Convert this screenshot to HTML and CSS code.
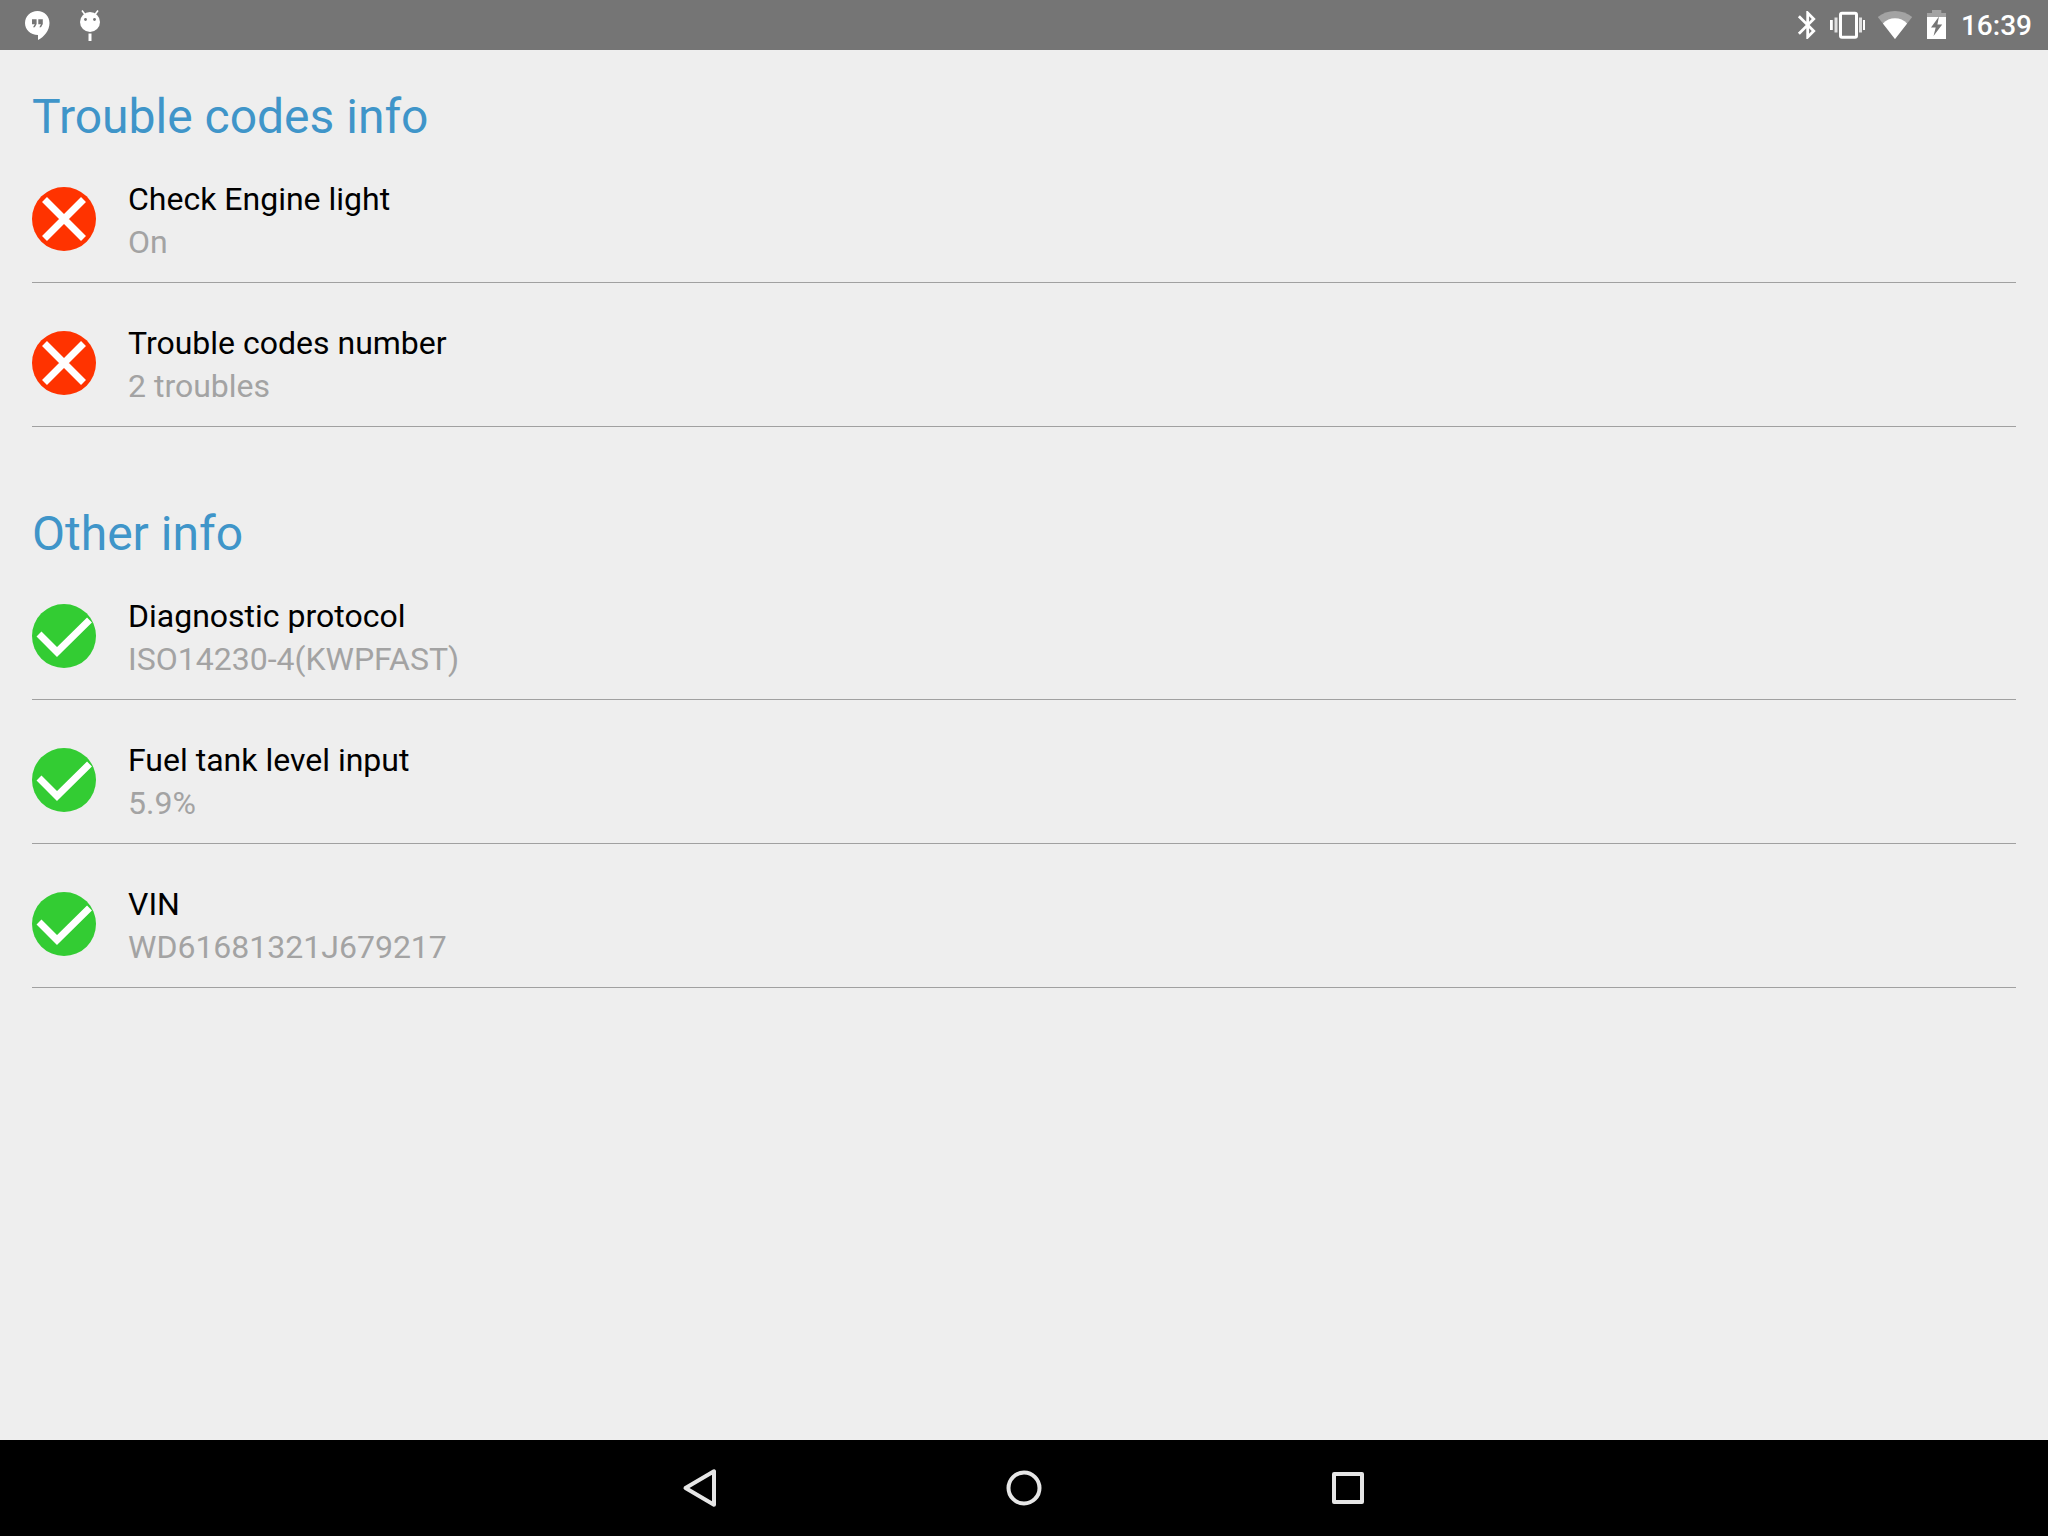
FILE: index.html
```
<!DOCTYPE html>
<html lang="en">
<head>
  <meta charset="UTF-8" />
  <meta name="viewport" content="width=device-width, initial-scale=1.0" />
  <title>Trouble codes info</title>
  <link rel="stylesheet" href="styles.css">
</head>
<body>
  <!-- Icons used more than once -->
  <svg class="sprite" aria-hidden="true">
    <symbol id="icon-error" viewBox="0 0 64 64">
      <circle cx="32" cy="32" r="32" fill="#ff3300"/>
      <path d="M12.5 12.5l39 39M51.5 12.5l-39 39" stroke="#fff" stroke-width="7" fill="none"/>
    </symbol>
    <symbol id="icon-ok" viewBox="0 0 64 64">
      <circle cx="32" cy="32" r="32" fill="#33cc33"/>
      <path d="M7 30l18 18L57.5 16" stroke="#fff" stroke-width="7" fill="none"/>
    </symbol>
  </svg>

  <!-- Status bar -->
  <header class="status-bar">
    <div class="notifications">
      <svg width="48" height="50" viewBox="0 0 48 50" role="img" aria-label="Hangouts">
        <path fill="#fff" fill-rule="evenodd" d="M24.5 11C31.4 11 36.500 16.2 36.500 23C36.500 30.500 31 37 25 40V35C17.500 35 12 29.700 12 23C12 16.200 17.500 11 24.500 11zM19 19.300V24.300H21.800L20 27.300H21.800L23.600 24V19.300zM25.300 19.300V24.300H28L26.300 27.300H28L29.800 24V19.300z"/>
      </svg>
      <svg width="48" height="50" viewBox="0 0 48 50" role="img" aria-label="Android">
        <path d="M16 10.5l3 4M32 10.5l-3 4" stroke="#fff" stroke-width="1.6"/>
        <circle cx="24" cy="22" r="10" fill="#fff"/>
        <circle cx="19.5" cy="19.5" r="1.4" fill="#757575"/>
        <circle cx="28.5" cy="19.5" r="1.4" fill="#757575"/>
        <path d="M22.5 33.5h3v7.5h-3z" fill="#fff"/>
      </svg>
    </div>
    <div class="system">
      <svg width="20" height="28" viewBox="5 2 13 20" role="img" aria-label="Bluetooth">
        <path fill="#fff" d="M17.71 7.71L12 2h-1v7.59L6.41 5 5 6.41 10.59 12 5 17.59 6.41 19 11 14.41V22h1l5.71-5.71-4.3-4.29 4.3-4.29zM13 5.83l1.88 1.88L13 9.59V5.83zm1.88 10.46L13 18.17v-3.76l1.88 1.88z"/>
      </svg>
      <svg width="36" height="50" viewBox="0 0 36 50" role="img" aria-label="Vibrate">
        <rect x="11.5" y="13.2" width="16" height="24" rx="1.5" fill="none" stroke="#fff" stroke-width="3"/>
        <path fill="#fff" d="M1 20h2.8v10H1zM34 20h2v10h-2z"/>
        <path fill="#e0e0e0" d="M5.500 17.500h3v15h-3zM30 17.500h3v15h-3z"/>
      </svg>
      <svg width="38" height="50" viewBox="0 0 38 50" role="img" aria-label="Wi-Fi">
        <path fill="#a3a3a3" d="M18 39L.8 17C5.500 13.200 11.500 11 18 11s12.500 2.200 17.200 6z"/>
        <path fill="#fff" d="M18 39L5.900 23.500C9 20 13.400 18.300 18 18.300s9 1.700 12.100 5.200z"/>
      </svg>
      <svg width="20" height="50" viewBox="0 0 20 50" role="img" aria-label="Battery charging">
        <path fill="#a3a3a3" d="M5 10h9.300v3H19v4H0v-4h5z"/>
        <path fill="#fff" d="M0 17h19v22H0z"/>
        <path fill="#757575" d="M12 16.500L4 27.500h4.700L6.500 36l8.700-11.500h-4.800z"/>
      </svg>
      <time class="clock">16:39</time>
    </div>
  </header>

  <main class="content">
    <section class="group">
      <h2>Trouble codes info</h2>
      <ul>
        <li class="item">
          <svg class="state"><use href="#icon-error"/></svg>
          <div>
            <p class="name">Check Engine light</p>
            <p class="value">On</p>
          </div>
        </li>
        <li class="item">
          <svg class="state"><use href="#icon-error"/></svg>
          <div>
            <p class="name">Trouble codes number</p>
            <p class="value">2 troubles</p>
          </div>
        </li>
      </ul>
    </section>

    <section class="group">
      <h2>Other info</h2>
      <ul>
        <li class="item">
          <svg class="state"><use href="#icon-ok"/></svg>
          <div>
            <p class="name">Diagnostic protocol</p>
            <p class="value">ISO14230-4(KWPFAST)</p>
          </div>
        </li>
        <li class="item">
          <svg class="state"><use href="#icon-ok"/></svg>
          <div>
            <p class="name">Fuel tank level input</p>
            <p class="value">5.9%</p>
          </div>
        </li>
        <li class="item">
          <svg class="state"><use href="#icon-ok"/></svg>
          <div>
            <p class="name">VIN</p>
            <p class="value">WD61681321J679217</p>
          </div>
        </li>
      </ul>
    </section>
  </main>

  <!-- Navigation bar -->
  <nav class="nav-bar">
    <button type="button" aria-label="Back">
      <svg width="64" height="64" viewBox="0 0 64 64"><path d="M46 15.3v33.4L17.5 32z"/></svg>
    </button>
    <button type="button" aria-label="Home">
      <svg width="64" height="64" viewBox="0 0 64 64"><circle cx="32" cy="32" r="15.5"/></svg>
    </button>
    <button type="button" aria-label="Recent apps">
      <svg width="64" height="64" viewBox="0 0 64 64"><path d="M18 18h28v28H18z"/></svg>
    </button>
  </nav>
</body>
</html>
```

FILE: styles.css
```
* {
  box-sizing: border-box;
}

body {
  margin: 0;
  min-height: 100vh;
  display: flex;
  flex-direction: column;
  font-family: Roboto, sans-serif;
  background: #eeeeee;
  color: #000;
}

.sprite {
  display: none;
}

/* Status bar */
.status-bar {
  height: 50px;
  display: flex;
  justify-content: space-between;
  padding: 0 16px 0 13px;
  background: #757575;
}

.notifications,
.system {
  display: flex;
  align-items: center;
}

.notifications {
  gap: 5px;
}

.system {
  gap: 12px;
}

.clock {
  min-width: 73px;
  padding-top: 2px;
  color: #fff;
  font-size: 28px;
  font-weight: 500;
  line-height: 48px;
  text-align: right;
}

/* Content */
.content {
  flex: 1;
  padding: 45px 32px;
}

.group + .group {
  margin-top: 85px;
}

h2 {
  margin: 0;
  color: #3f95c9;
  font-size: 48px;
  font-weight: 400;
  line-height: 44px;
}

ul {
  margin: 0;
  padding: 0;
  list-style: none;
}

.item {
  display: flex;
  align-items: flex-start;
  gap: 32px;
  padding: 39px 0 18px;
  border-bottom: 1px solid #a0a0a0;
}

.state {
  width: 64px;
  height: 64px;
  margin-top: 9px;
}

.name,
.value {
  margin: 0;
  font-size: 32px;
  line-height: 43px;
}

.value {
  color: #a3a3a3;
}

/* Navigation bar */
.nav-bar {
  height: 96px;
  display: flex;
  justify-content: center;
  background: #000;
}

.nav-bar button {
  width: 324px;
  padding: 0;
  border: none;
  background: none;
  cursor: pointer;
}

.nav-bar svg {
  display: block;
  margin: 0 auto;
  fill: none;
  stroke: #e6e6e6;
  stroke-width: 4;
  stroke-linejoin: round;
}
```
